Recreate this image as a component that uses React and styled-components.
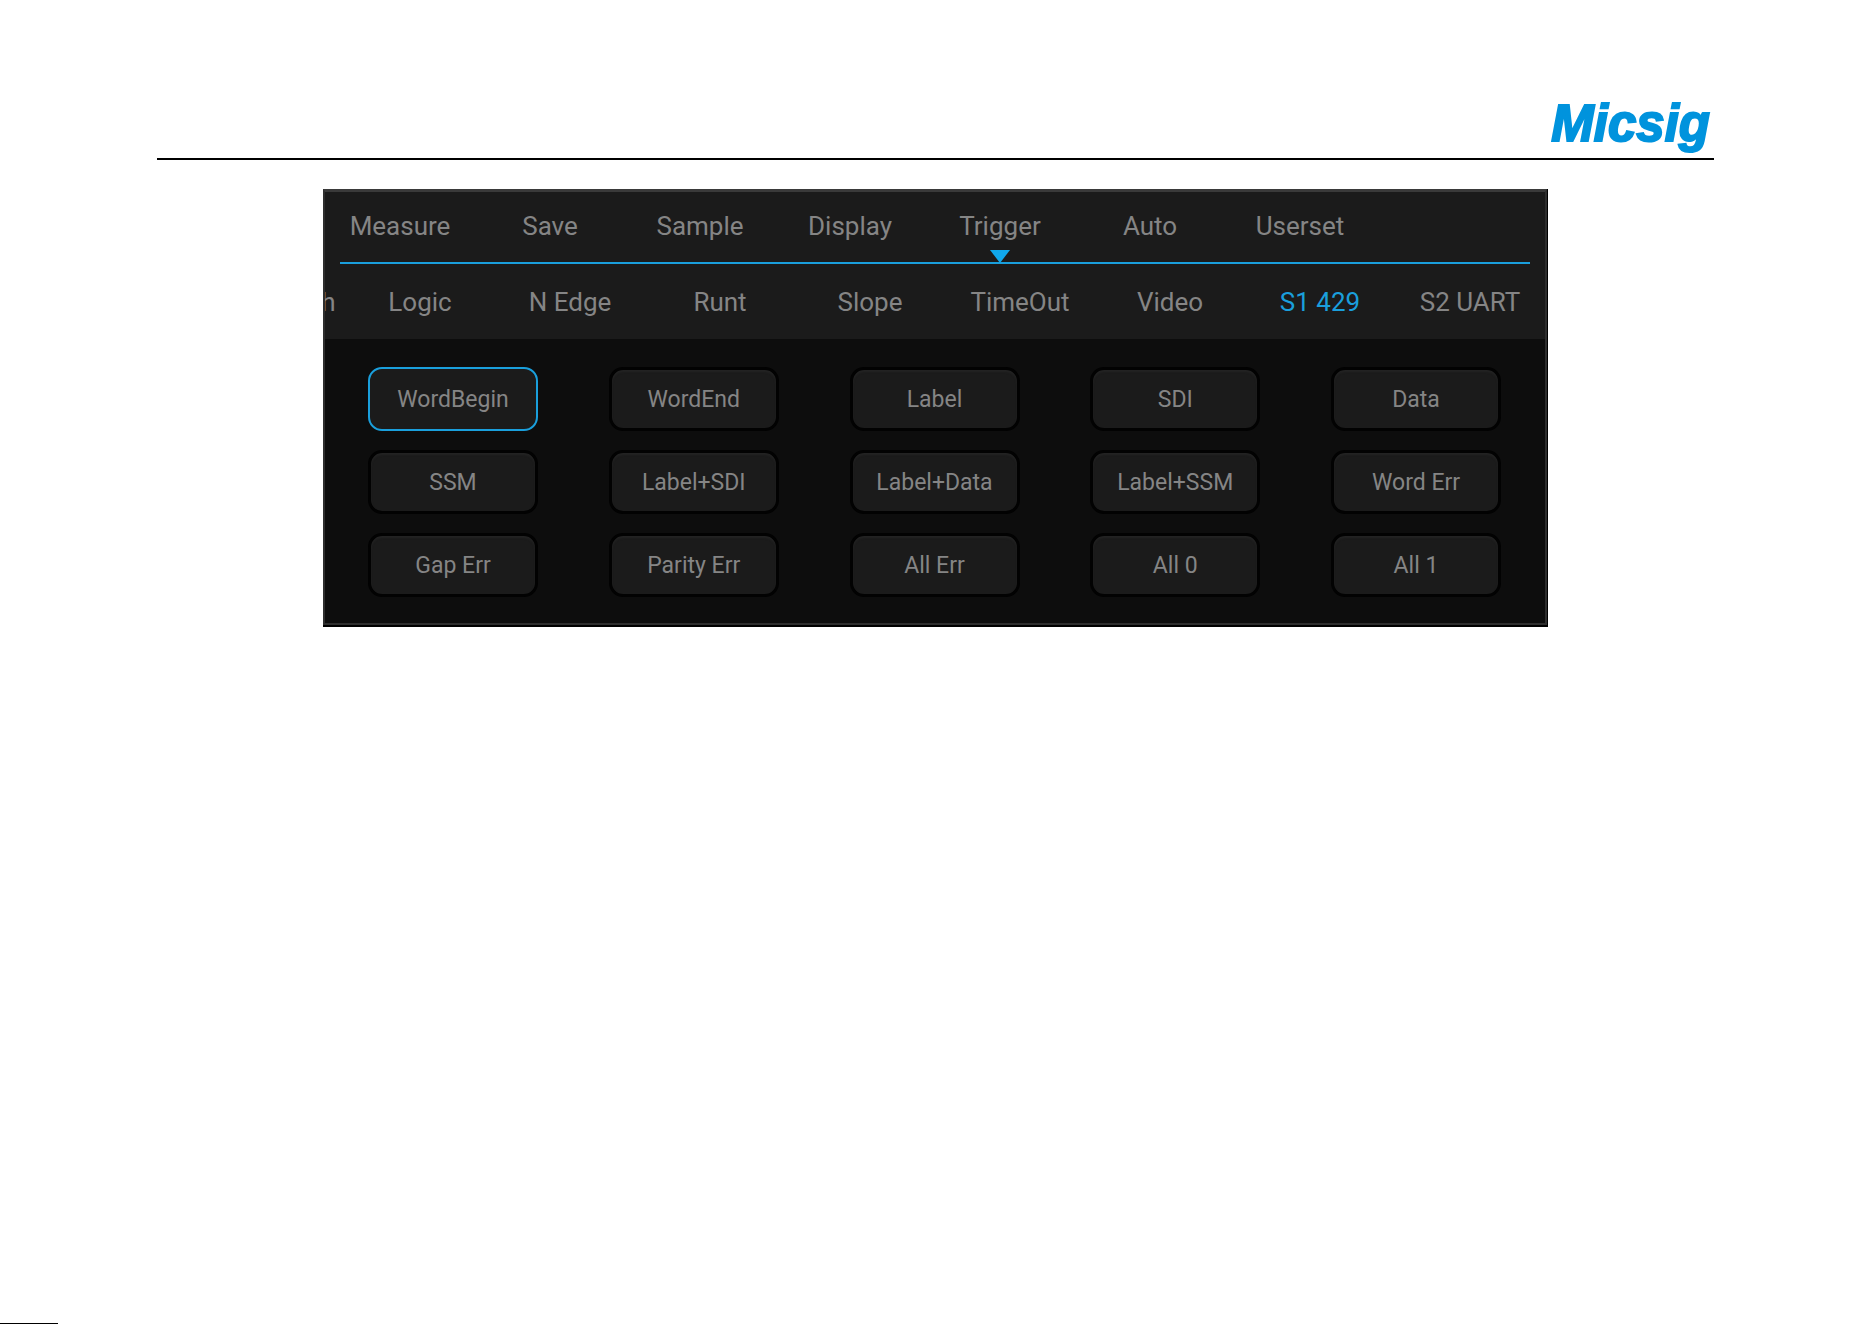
import React, { useState } from 'react';
import styled, { createGlobalStyle, css } from 'styled-components';

const colors = {
	brand: '#0093dd',
	accent: '#1a9fdc',
	arrow: '#10a8ec',
	text: '#858585',
	bar: '#1b1b1b',
	body: '#0d0d0d',
	edge: '#2e2e2e'
};

const GlobalStyle = createGlobalStyle`
	* {
		box-sizing: border-box;
	}

	body {
		margin: 0;
		background-color: #fff;
		font-family: Roboto, "Liberation Sans", sans-serif;
	}

	button {
		margin: 0;
		padding: 0;
		border: 0;
		background: none;
		font-family: inherit;
		cursor: pointer;
	}
`;

const Page = styled.div`
	display: flex;
	flex-direction: column;
	min-height: 100vh;
	padding: 96px 158px 0 157px;
`;

const Header = styled.header`
	display: flex;
	justify-content: flex-end;
	padding: 0 4px 6px;
	border-bottom: 2px solid #000;
`;

const Logo = styled.span`
	color: ${colors.brand};
	font-family: "Liberation Sans", Arial, sans-serif;
	font-size: 51px;
	font-weight: 700;
	font-style: italic;
	line-height: 56px;
	-webkit-text-stroke: 2px ${colors.brand};
`;

const Frame = styled.main`
	width: 100%;
	max-width: 1225px;
	margin: 29px auto 0;
	border: solid #000;
	border-width: 0 1px 2px 0;
`;

const Panel = styled.div`
	border: 2px solid ${colors.edge};
	border-top: 3px solid #3a3a3a;
	background-color: ${colors.body};
`;

const Menu = styled.nav`
	display: grid;
	grid-template-columns: repeat(8, 1fr);
	padding: 0 20px 2px 0;
	background-color: ${colors.bar};
`;

const Tab = styled.button`
	position: relative;
	color: ${props => props.$active ? colors.accent : colors.text};
	font-size: 26px;
	line-height: 68px;
	white-space: nowrap;
`;

const MenuTab = styled(Tab)`
	${props => props.$open && css`
		&::after {
			content: "";
			position: absolute;
			left: calc(50% - 10px);
			bottom: -3px;
			border: solid transparent;
			border-width: 13px 10px 0;
			border-top-color: ${colors.arrow};
		}
	`}
`;

const Divider = styled.div`
	padding: 0 15px;
	background-color: ${colors.bar};

	&::before {
		content: "";
		display: block;
		height: 2px;
		background-color: ${colors.accent};
	}
`;

// Wider than the panel, scrolled to its last entry
const SubMenu = styled.nav`
	display: flex;
	justify-content: flex-end;
	overflow: hidden;
	padding: 4px 0 3px;
	background-color: ${colors.bar};
`;

const SubTab = styled(Tab)`
	flex: 0 0 150px;
`;

const Options = styled.div`
	display: grid;
	grid-template-columns: repeat(5, 170px);
	justify-content: space-between;
	row-gap: 19px;
	padding: 28px 44px 26px 43px;
`;

const Option = styled.button`
	height: 64px;
	border: ${props => props.$selected ? `2px solid ${colors.accent}` : '3px solid #020202'};
	border-radius: 14px;
	background-color: ${colors.bar};
	box-shadow: ${props => props.$selected ? 'none' : 'inset 0 2px 2px #232323'};
	color: ${colors.text};
	font-size: 23px;
`;

const Footer = styled.footer`
	width: 58px;
	height: 1px;
	margin: auto 0 0 -157px;
	background-color: #000;
`;

const menu = ['Measure', 'Save', 'Sample', 'Display', 'Trigger', 'Auto', 'Userset'];

const triggers = ['PulseWidth', 'Logic', 'N Edge', 'Runt', 'Slope', 'TimeOut', 'Video', 'S1 429', 'S2 UART'];

const options = [
	'WordBegin', 'WordEnd', 'Label', 'SDI', 'Data',
	'SSM', 'Label+SDI', 'Label+Data', 'Label+SSM', 'Word Err',
	'Gap Err', 'Parity Err', 'All Err', 'All 0', 'All 1'
];

const App = () => {
	const [open, setOpen] = useState('Trigger');
	const [trigger, setTrigger] = useState('S1 429');
	const [option, setOption] = useState('WordBegin');

	return (
		<React.Fragment>
			<GlobalStyle />
			<Page>
				<Header><Logo>Micsig</Logo></Header>
				<Frame>
					<Panel>
						<Menu aria-label="Menu">
							{menu.map(name => (
								<MenuTab key={name} $open={name === open} onClick={() => setOpen(name)}>{name}</MenuTab>
							))}
						</Menu>
						<Divider />
						<SubMenu aria-label="Trigger type">
							{triggers.map(name => (
								<SubTab key={name} $active={name === trigger} onClick={() => setTrigger(name)}>{name}</SubTab>
							))}
						</SubMenu>
						<Options>
							{options.map(name => (
								<Option key={name} $selected={name === option} aria-pressed={name === option} onClick={() => setOption(name)}>{name}</Option>
							))}
						</Options>
					</Panel>
				</Frame>
				<Footer />
			</Page>
		</React.Fragment>
	);
};

export default App;
